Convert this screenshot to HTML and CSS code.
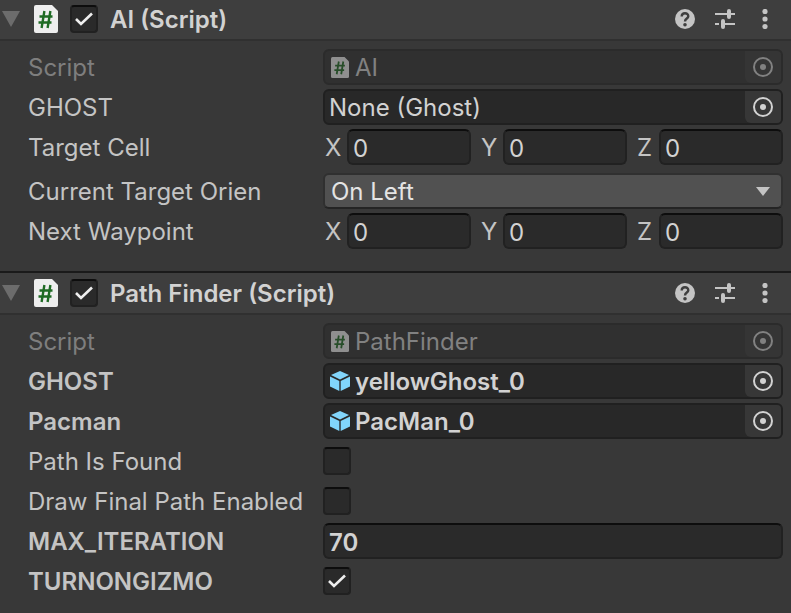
FILE: index.html
```html
<!DOCTYPE html>
<html lang="en">
<head>
<meta charset="utf-8">
<title>Inspector</title>
<link rel="stylesheet" href="styles.css">
</head>
<body>
<svg class="defs" aria-hidden="true">
  <symbol id="fold" viewBox="0 0 18 16"><path d="M0 0H18L9 16Z"/></symbol>
  <symbol id="arrow" viewBox="0 0 14 9"><path d="M0 0H14L7 9Z"/></symbol>
  <symbol id="script" viewBox="0 0 24 28"><path fill="#eeeeee" d="M2 0H18L24 6V26Q24 28 22 28H2Q0 28 0 26V2Q0 0 2 0Z"/><path fill="none" stroke="#1f6b24" stroke-width="2.400" d="M10.400 6L7.600 23M16.400 6L13.600 23M5.500 11.500H18.500M4.500 17.500H17.500"/></symbol>
  <symbol id="check" viewBox="0 0 28 28"><path fill="none" stroke="#eeeeee" stroke-width="2.600" d="M6 14L11 19L22 8.500"/></symbol>
  <symbol id="help" viewBox="0 0 20 20"><circle cx="10" cy="10" r="10" fill="#c4c4c4"/><path fill="none" stroke="#3e3e3e" stroke-width="2.400" d="M6.700 7.500C6.700 3.200 13.300 3.200 13.300 7.300C13.300 9.600 10 9.600 10 12.500"/><circle cx="10" cy="15.800" r="1.800" fill="#3e3e3e"/></symbol>
  <symbol id="preset" viewBox="0 0 20 20"><path fill="none" stroke="#c4c4c4" stroke-width="2" d="M0 5H12M16 5H20M0 15H4M8 15H20"/><rect x="12" y="0" width="4" height="10" rx="2" fill="#c4c4c4"/><rect x="6" y="10" width="4" height="10" rx="2" fill="#c4c4c4"/></symbol>
  <symbol id="more" viewBox="0 0 6 20"><g fill="#c4c4c4"><circle cx="3" cy="2.500" r="2.600"/><circle cx="3" cy="10" r="2.600"/><circle cx="3" cy="17.500" r="2.600"/></g></symbol>
  <symbol id="target" viewBox="0 0 20 20"><circle cx="10" cy="10" r="9" fill="none" stroke="currentColor" stroke-width="2"/><circle cx="10" cy="10" r="3" fill="currentColor"/></symbol>
  <symbol id="cube" viewBox="0 0 20 20"><g fill="#81d4fa"><path d="M10 0L19 4L10 8.500L1 4Z"/><path d="M0 5.500L9.300 10V20L0 15.500Z"/><path d="M20 5.500L10.700 10V20L20 15.500Z"/></g></symbol>
</svg>
<main>
  <section class="component first">
    <header class="head">
      <button class="icon-btn fold" aria-label="Collapse AI"><svg><use href="#fold"/></svg></button>
      <svg class="script-icon"><use href="#script"/></svg>
      <span class="check"><input type="checkbox" id="ai-on" checked><svg><use href="#check"/></svg></span>
      <label class="title" for="ai-on">AI (Script)</label>
      <button class="icon-btn tool" aria-label="Help"><svg><use href="#help"/></svg></button>
      <button class="icon-btn tool" aria-label="Presets"><svg><use href="#preset"/></svg></button>
      <button class="icon-btn tool more" aria-label="More"><svg><use href="#more"/></svg></button>
    </header>
    <div class="rows">
      <div class="row disabled">
        <label class="name" for="ai-script">Script</label>
        <div class="object"><svg class="script-small"><use href="#script"/></svg><input id="ai-script" value="AI" disabled><button class="pick" aria-label="Pick script" disabled><svg><use href="#target"/></svg></button></div>
      </div>
      <div class="row">
        <label class="name" for="ai-ghost">GHOST</label>
        <div class="object"><input id="ai-ghost" value="None (Ghost)" readonly><button class="pick" aria-label="Pick ghost"><svg><use href="#target"/></svg></button></div>
      </div>
      <div class="row" role="group" aria-labelledby="cell">
        <span class="name" id="cell">Target Cell</span>
        <div class="vector">
          <div class="axis"><label class="name" for="cx">X</label><input class="text" id="cx" value="0"></div>
          <div class="axis"><label class="name" for="cy">Y</label><input class="text" id="cy" value="0"></div>
          <div class="axis"><label class="name" for="cz">Z</label><input class="text" id="cz" value="0"></div>
        </div>
      </div>
      <div class="row spaced">
        <label class="name" for="orient">Current Target Orien</label>
        <div class="drop"><select id="orient"><option>On Left</option></select><svg><use href="#arrow"/></svg></div>
      </div>
      <div class="row" role="group" aria-labelledby="way">
        <span class="name" id="way">Next Waypoint</span>
        <div class="vector">
          <div class="axis"><label class="name" for="wx">X</label><input class="text" id="wx" value="0"></div>
          <div class="axis"><label class="name" for="wy">Y</label><input class="text" id="wy" value="0"></div>
          <div class="axis"><label class="name" for="wz">Z</label><input class="text" id="wz" value="0"></div>
        </div>
      </div>
    </div>
  </section>
  <section class="component">
    <header class="head">
      <button class="icon-btn fold" aria-label="Collapse Path Finder"><svg><use href="#fold"/></svg></button>
      <svg class="script-icon"><use href="#script"/></svg>
      <span class="check"><input type="checkbox" id="pf-on" checked><svg><use href="#check"/></svg></span>
      <label class="title" for="pf-on">Path Finder (Script)</label>
      <button class="icon-btn tool" aria-label="Help"><svg><use href="#help"/></svg></button>
      <button class="icon-btn tool" aria-label="Presets"><svg><use href="#preset"/></svg></button>
      <button class="icon-btn tool more" aria-label="More"><svg><use href="#more"/></svg></button>
    </header>
    <div class="rows">
      <div class="row disabled">
        <label class="name" for="pf-script">Script</label>
        <div class="object"><svg class="script-small"><use href="#script"/></svg><input id="pf-script" value="PathFinder" disabled><button class="pick" aria-label="Pick script" disabled><svg><use href="#target"/></svg></button></div>
      </div>
      <div class="row bold">
        <label class="name" for="pf-ghost">GHOST</label>
        <div class="object"><svg class="cube"><use href="#cube"/></svg><input id="pf-ghost" value="yellowGhost_0" readonly><button class="pick" aria-label="Pick ghost"><svg><use href="#target"/></svg></button></div>
      </div>
      <div class="row bold">
        <label class="name" for="pf-pac">Pacman</label>
        <div class="object"><svg class="cube"><use href="#cube"/></svg><input id="pf-pac" value="PacMan_0" readonly><button class="pick" aria-label="Pick Pacman"><svg><use href="#target"/></svg></button></div>
      </div>
      <div class="row">
        <label class="name" for="found">Path Is Found</label>
        <span class="check"><input type="checkbox" id="found"><svg><use href="#check"/></svg></span>
      </div>
      <div class="row">
        <label class="name" for="draw">Draw Final Path Enabled</label>
        <span class="check"><input type="checkbox" id="draw"><svg><use href="#check"/></svg></span>
      </div>
      <div class="row bold">
        <label class="name" for="max">MAX_ITERATION</label>
        <input class="text" id="max" value="70">
      </div>
      <div class="row bold">
        <label class="name" for="gizmo">TURNONGIZMO</label>
        <span class="check"><input type="checkbox" id="gizmo" checked><svg><use href="#check"/></svg></span>
      </div>
    </div>
  </section>
</main>
</body>
</html>
```
FILE: styles.css
```css
* { box-sizing: border-box; }
body {
  margin: 0;
  background: #383838;
  color: #c4c4c4;
  font: 24px/34px Inter, sans-serif;
}
svg { display: block; }
.defs { position: absolute; width: 0; height: 0; }
input, select, button {
  margin: 0;
  padding: 0;
  border: 0;
  background: none;
  color: inherit;
  font: inherit;
  appearance: none;
  outline: 0;
}
.component { border-top: 2px solid #1a1a1a; }
.component.first { border-top: 0; }
.head {
  display: flex;
  align-items: center;
  height: 42px;
  padding-right: 16px;
  background: #3e3e3e;
  border-bottom: 2px solid #303030;
}
.first .head { height: 41px; padding-bottom: 1px; }
.fold { margin: 0 14px 0 2px; color: #6c6c6c; }
.fold svg { width: 18px; height: 16px; fill: currentColor; }
.script-icon { width: 24px; height: 28px; }
.head .check { margin: 0 12px; }
.title { flex: 1; padding-top: 2px; color: #d2d2d2; font-weight: 600; }
.tool { width: 20px; margin-left: 20px; }
.tool svg { width: 20px; height: 20px; }
.more svg { width: 6px; margin: 0 auto; }
.check { display: grid; width: 28px; height: 28px; }
.check > * { grid-area: 1 / 1; width: 28px; height: 28px; }
.check svg { visibility: hidden; pointer-events: none; }
.check input:checked + svg { visibility: visible; }
.check input, .text {
  background: #2a2a2a;
  border: 2px solid #212121;
  border-top-color: #0d0d0d;
  border-radius: 4px;
}
.rows { display: grid; gap: 4px; padding: 8px 8px 22px 28px; }
.component:not(.first) .rows { padding-bottom: 8px; }
.row {
  display: grid;
  grid-template-columns: 295px minmax(0, 1fr);
  align-items: center;
  min-height: 36px;
}
.name { padding-top: 2px; }
.spaced { margin-top: 4px; }
.bold { font-weight: 600; }
.text {
  width: 100%;
  min-width: 0;
  height: 36px;
  padding: 2px 4px 0;
  border-radius: 6px;
  color: #d2d2d2;
}
.vector {
  display: grid;
  grid-template-columns: repeat(3, minmax(0, 1fr));
  gap: 8px;
}
.axis { display: flex; align-items: center; }
.axis .name { flex: 0 0 24px; padding-left: 2px; }
.object {
  display: flex;
  align-items: center;
  height: 36px;
  padding-left: 4px;
  overflow: hidden;
  background: #282828;
  border: 2px solid #202020;
  border-radius: 6px;
  color: #d2d2d2;
}
.object input { flex: 1; min-width: 0; height: 32px; padding-top: 2px; }
.pick {
  display: grid;
  place-items: center;
  width: 36px;
  height: 32px;
  background: #373737;
  border-bottom-left-radius: 6px;
}
.pick svg { width: 20px; height: 20px; }
.cube { width: 20px; height: 20px; margin: 0 5px 0 1px; }
.script-small { width: 18px; height: 21px; margin: 0 6px 0 2px; opacity: .5; }
.disabled > .name { color: #7e7e7e; }
.disabled .object { background: #303030; border-color: #2b2b2b; color: #818181; }
.disabled .pick { background: #353535; }
.drop { display: grid; align-items: center; }
.drop > * { grid-area: 1 / 1; }
.drop select {
  width: 100%;
  height: 36px;
  padding: 0 40px 4px 6px;
  background: #515151;
  border: 2px solid #303030;
  border-bottom-color: #242424;
  border-radius: 6px;
  color: #e4e4e4;
}
.drop svg {
  justify-self: end;
  width: 14px;
  height: 9px;
  margin-right: 13px;
  fill: #c4c4c4;
  pointer-events: none;
}
```
